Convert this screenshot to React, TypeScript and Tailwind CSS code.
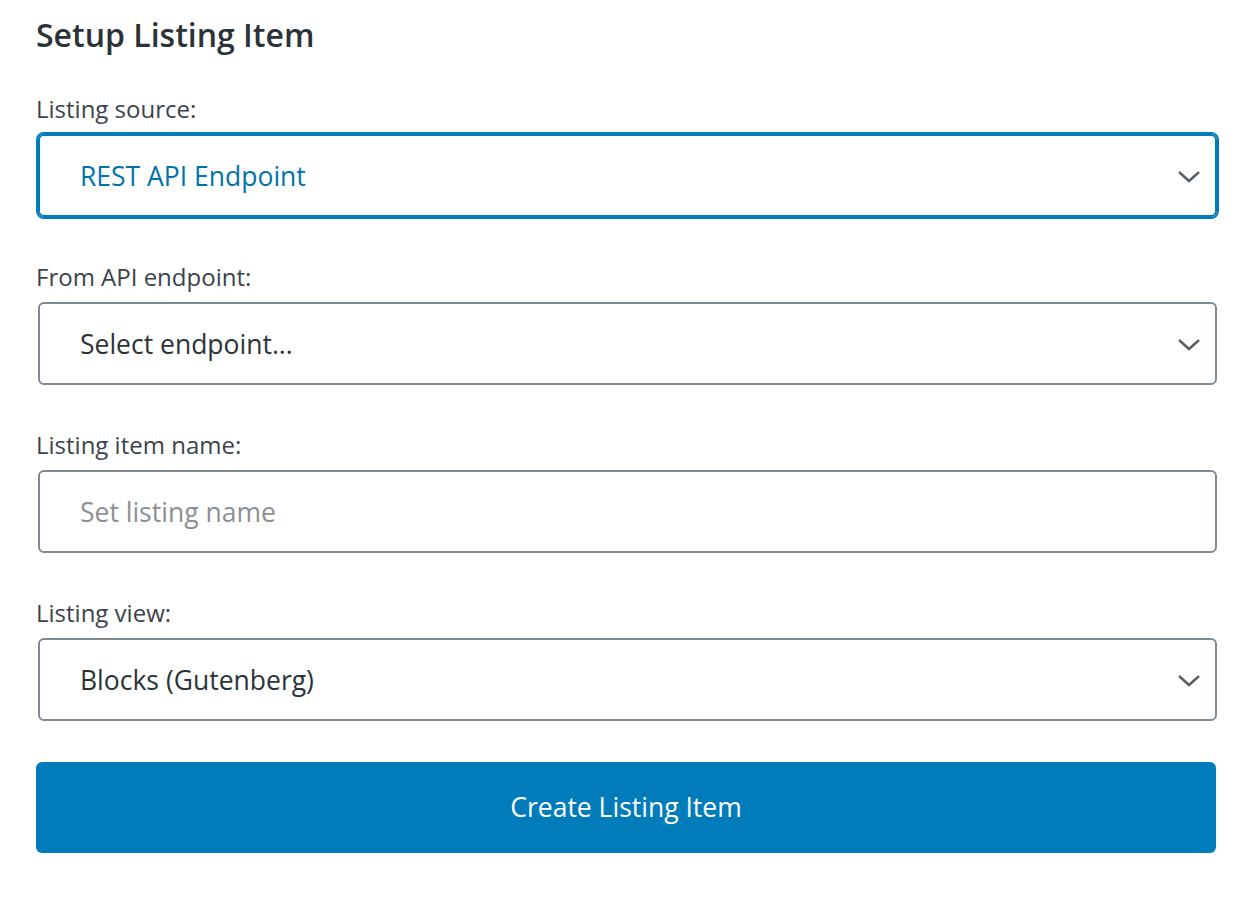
import React from "react";

const font = { fontFamily: '"Open Sans", "Noto Sans", sans-serif' };

function Chevron() {
  return (
    <svg width="22" height="12" viewBox="0 0 22 12" fill="none" className="shrink-0">
      <path d="M2 2 L11 10 L20 2" stroke="#555d66" strokeWidth="2.6" strokeLinecap="square" />
    </svg>
  );
}

function Field({ label, children }: { label: string; children: React.ReactNode }) {
  return (
    <div className="flex flex-col">
      <div className="text-[24px] leading-[30px] text-[#3c434a] mb-[10px]">{label}</div>
      {children}
    </div>
  );
}

export default function App() {
  return (
    <div className="w-[1250px] h-[898px] bg-white" style={font}>
      <div className="pl-[36px] pr-[31px] pt-[15px]">
        <h1 className="text-[32px] leading-[40px] font-semibold text-[#2c3338] mb-[39px]">Setup Listing Item</h1>
        <div className="flex flex-col gap-[45px]">
          <Field label="Listing source:">
            <div className="mx-[2px] h-[83px] border-2 border-[#007cba] ring-2 ring-[#007cba] rounded-[6px] flex items-center justify-between pl-[40px] pr-[15px] pt-[2px]">
              <span className="text-[26.5px] text-[#0073aa]">REST API Endpoint</span>
              <Chevron />
            </div>
          </Field>
          <Field label="From API endpoint:">
            <div className="mx-[2px] h-[83px] border-2 border-[#7e8993] rounded-[6px] flex items-center justify-between pl-[40px] pr-[15px] pt-[2px]">
              <span className="text-[26.5px] text-[#2c3338]">Select endpoint...</span>
              <Chevron />
            </div>
          </Field>
          <Field label="Listing item name:">
            <div className="mx-[2px] h-[83px] border-2 border-[#7e8993] rounded-[6px] flex items-center pl-[40px] pr-[15px] pt-[2px]">
              <span className="text-[26.5px] text-[#8c8f94]">Set listing name</span>
            </div>
          </Field>
          <Field label="Listing view:">
            <div className="mx-[2px] h-[83px] border-2 border-[#7e8993] rounded-[6px] flex items-center justify-between pl-[40px] pr-[15px] pt-[2px]">
              <span className="text-[26.5px] text-[#2c3338]">Blocks (Gutenberg)</span>
              <Chevron />
            </div>
          </Field>
        </div>
        <button className="mt-[41px] w-[1180px] h-[91px] bg-[#007cba] rounded-[6px] flex items-center justify-center text-white text-[26.5px]">
          Create Listing Item
        </button>
      </div>
    </div>
  );
}
